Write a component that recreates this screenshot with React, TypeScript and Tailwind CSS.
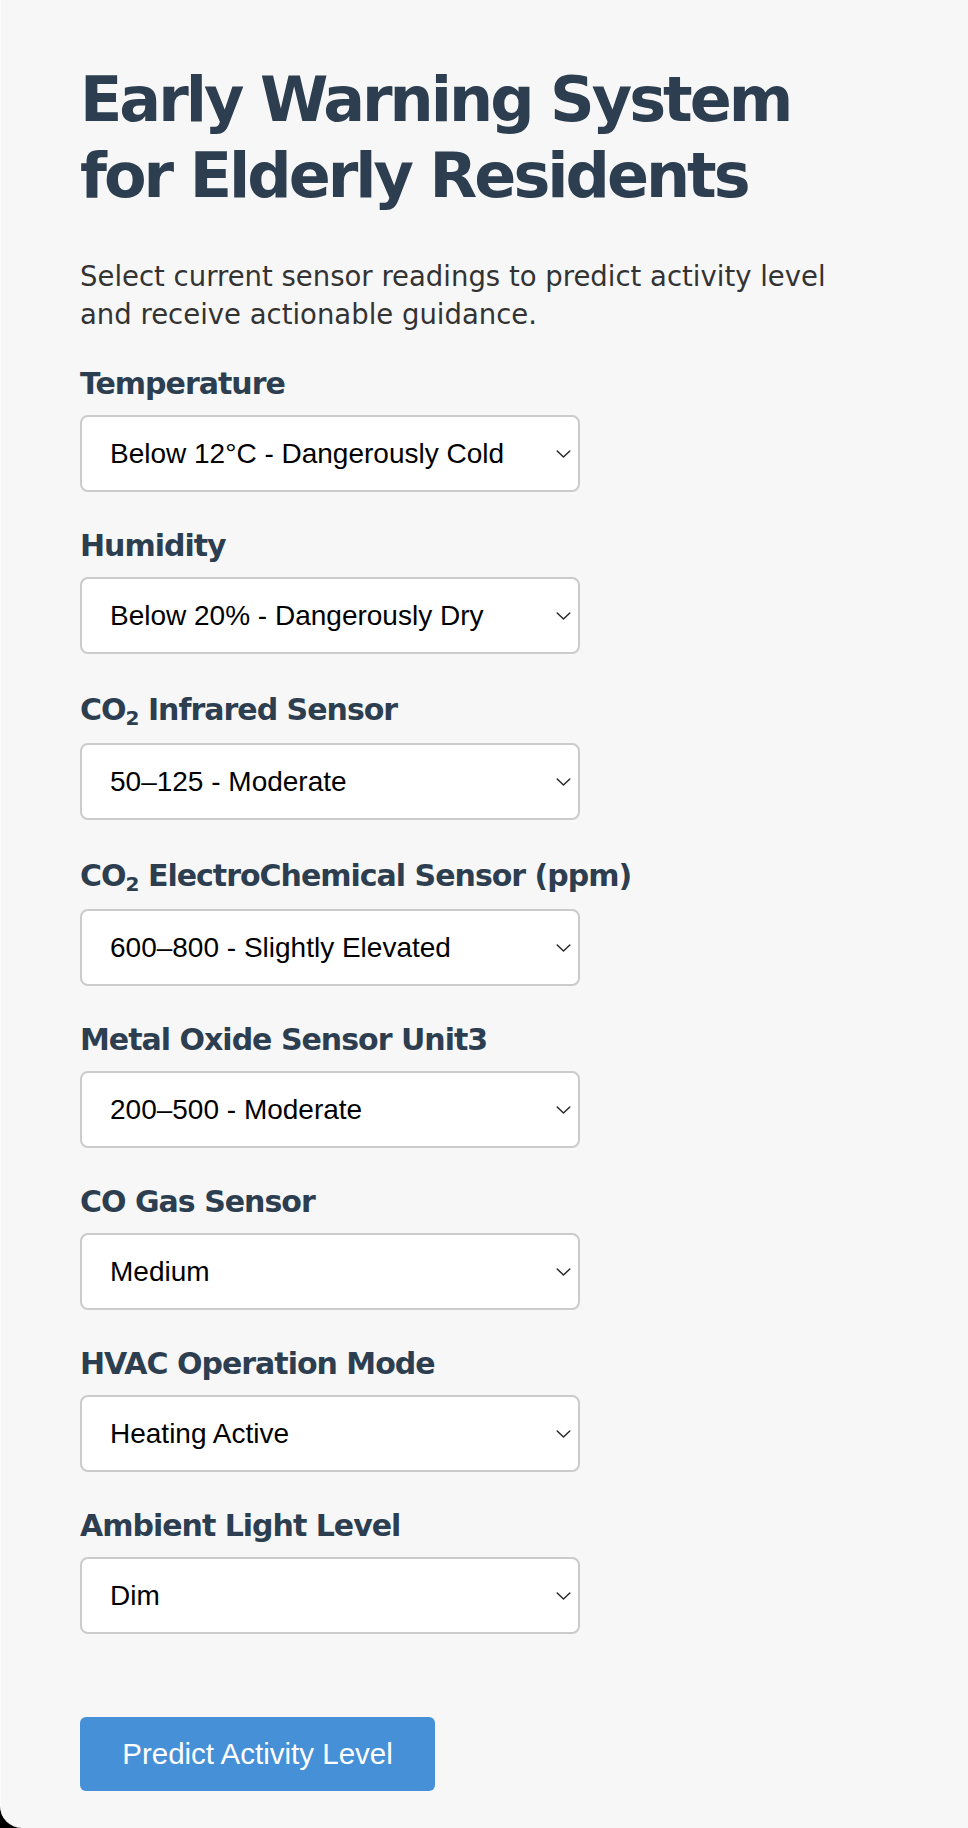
import { ReactNode, useState } from "react";

type Field = {
  id: string;
  label: ReactNode;
  tall?: boolean;
  options: string[];
  value: string;
};

const fields: Field[] = [
  {
    id: "temperature",
    label: "Temperature",
    options: [
      "Below 12°C - Dangerously Cold",
      "12–18°C - Cool",
      "18–24°C - Comfortable",
      "24–30°C - Warm",
      "Above 30°C - Dangerously Hot",
    ],
    value: "Below 12°C - Dangerously Cold",
  },
  {
    id: "humidity",
    label: "Humidity",
    options: [
      "Below 20% - Dangerously Dry",
      "20–40% - Dry",
      "40–60% - Comfortable",
      "60–80% - Humid",
      "Above 80% - Dangerously Humid",
    ],
    value: "Below 20% - Dangerously Dry",
  },
  {
    id: "co2ir",
    label: (
      <>
        CO<sub>2</sub> Infrared Sensor
      </>
    ),
    tall: true,
    options: ["Below 50 - Low", "50–125 - Moderate", "Above 125 - High"],
    value: "50–125 - Moderate",
  },
  {
    id: "co2ec",
    label: (
      <>
        CO<sub>2</sub> ElectroChemical Sensor (ppm)
      </>
    ),
    tall: true,
    options: [
      "Below 600 - Normal",
      "600–800 - Slightly Elevated",
      "800–1200 - Elevated",
      "Above 1200 - Dangerous",
    ],
    value: "600–800 - Slightly Elevated",
  },
  {
    id: "mox",
    label: "Metal Oxide Sensor Unit3",
    options: ["Below 200 - Low", "200–500 - Moderate", "Above 500 - High"],
    value: "200–500 - Moderate",
  },
  {
    id: "co",
    label: "CO Gas Sensor",
    options: ["Low", "Medium", "High"],
    value: "Medium",
  },
  {
    id: "hvac",
    label: "HVAC Operation Mode",
    options: ["Off", "Heating Active", "Cooling Active", "Ventilation Only"],
    value: "Heating Active",
  },
  {
    id: "light",
    label: "Ambient Light Level",
    options: ["Dark", "Dim", "Normal", "Bright"],
    value: "Dim",
  },
];

const Chevron = () => (
  <svg
    width="15"
    height="9"
    viewBox="0 0 15 9"
    fill="none"
    stroke="#2a2a2a"
    strokeWidth="1.5"
    strokeLinecap="round"
    strokeLinejoin="round"
    className="pointer-events-none absolute right-[9px] top-1/2 -translate-y-1/2"
    aria-hidden
  >
    <path d="M1.2 1.5 7.5 7.5l6.3-6" />
  </svg>
);

const SensorSelect = ({ field }: { field: Field }) => {
  const [value, setValue] = useState(field.value);
  return (
    <div className="mb-[36px]">
      <label
        htmlFor={field.id}
        className={
          "block mb-[14px] text-[30px] font-bold tracking-[-1px] text-[#2c3e50] [&_sub]:text-[20px] " +
          (field.tall ? "leading-[39px]" : "leading-[35px]")
        }
      >
        {field.label}
      </label>
      <div className="relative w-[500px]">
        <select
          id={field.id}
          value={value}
          onChange={(e) => setValue(e.target.value)}
          className="block h-[77px] w-full appearance-none rounded-[8px] border-2 border-[#cbcbcb] bg-white pl-[28px] pr-[40px] font-['Liberation_Sans',Arial,sans-serif] text-[28px] text-black outline-none"
        >
          {field.options.map((o) => (
            <option key={o} value={o}>
              {o}
            </option>
          ))}
        </select>
        <Chevron />
      </div>
    </div>
  );
};

export default function App() {
  return (
    <div className="min-h-[1828px] bg-black">
      <div className="min-h-[1828px] rounded-bl-[22px] border-l border-[#fcfcfc] bg-[#f7f7f7] pl-[79px] pr-[80px] pt-[62px] pb-[37px] font-['DejaVu_Sans',Verdana,sans-serif]">
        <h1 className="text-[62px] font-bold leading-[76px] tracking-[-3px] text-[#2c3e50]">
          Early Warning System for Elderly Residents
        </h1>
        <p className="mt-[43px] mb-[33px] max-w-[780px] text-[27.5px] leading-[38px] text-[#333333]">
          Select current sensor readings to predict activity level and receive
          actionable guidance.
        </p>

        <form onSubmit={(e) => e.preventDefault()}>
          {fields.map((f) => (
            <SensorSelect key={f.id} field={f} />
          ))}
          <button
            type="submit"
            className="mt-[47px] h-[74px] w-[355px] rounded-[6px] bg-[#4590d6] font-['Liberation_Sans',Arial,sans-serif] text-[29.5px] text-white"
          >
            Predict Activity Level
          </button>
        </form>
      </div>
    </div>
  );
}
